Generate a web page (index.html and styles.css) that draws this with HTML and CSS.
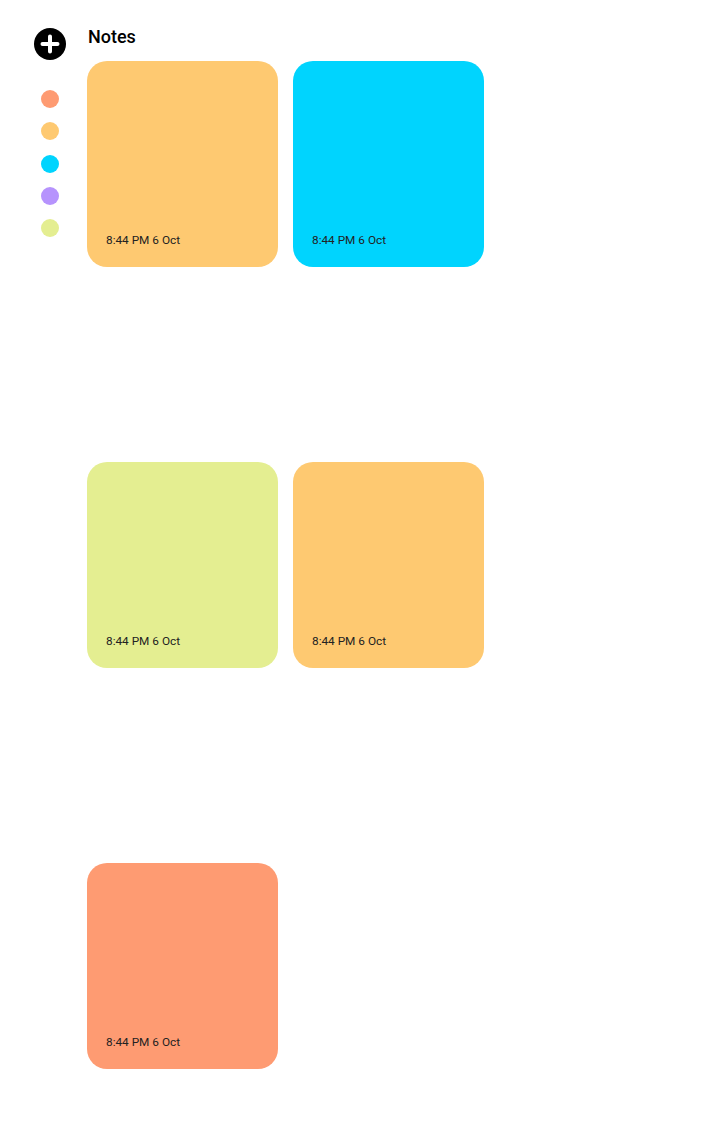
FILE: index.html
```html
<!DOCTYPE html>
<html lang="en">
<head>
<meta charset="utf-8">
<title>Notes</title>
<link rel="stylesheet" href="styles.css">
</head>
<body>
<div class="app">
  <aside class="sidebar">
    <button class="add-btn" aria-label="Add note">
      <svg width="32" height="32" viewBox="0 0 32 32">
        <circle cx="16" cy="16" r="16" fill="#000"/>
        <path d="M16 8.5v15M8.5 16h15" stroke="#fff" stroke-width="4" stroke-linecap="round"/>
      </svg>
    </button>
    <div class="palette">
      <span class="dot c-salmon"></span>
      <span class="dot c-yellow"></span>
      <span class="dot c-cyan"></span>
      <span class="dot c-purple"></span>
      <span class="dot c-lime"></span>
    </div>
  </aside>
  <main class="main">
    <h1 class="title">Notes</h1>
    <div class="grid">
      <div class="note c-yellow"><span class="date">8:44 PM 6 Oct</span></div>
      <div class="note c-cyan"><span class="date">8:44 PM 6 Oct</span></div>
      <div class="note c-lime"><span class="date">8:44 PM 6 Oct</span></div>
      <div class="note c-yellow"><span class="date">8:44 PM 6 Oct</span></div>
      <div class="note c-salmon"><span class="date">8:44 PM 6 Oct</span></div>
    </div>
  </main>
</div>
</body>
</html>
```
FILE: styles.css
```css
* { box-sizing: border-box; }
html, body { margin: 0; padding: 0; background: #fff; }
body { font-family: Roboto, "Liberation Sans", sans-serif; color: #000; }

.app {
  display: flex;
  align-items: flex-start;
  width: 718px;
  min-height: 1148px;
}

.sidebar {
  width: 87px;
  padding: 28px 0 0 34px;
  display: flex;
  flex-direction: column;
}

.add-btn {
  width: 32px;
  height: 32px;
  padding: 0;
  border: 0;
  background: none;
  display: block;
}
.add-btn svg { display: block; }

.palette {
  margin-top: 30px;
  display: flex;
  flex-direction: column;
  gap: 14.25px;
  padding-left: 7px;
}

.dot {
  display: block;
  width: 18px;
  height: 18px;
  border-radius: 50%;
}

.main { padding-top: 25px; }

.title {
  margin: 0;
  font-size: 18px;
  font-weight: 500;
  line-height: 24px;
  height: 36px;
  padding-left: 1px;
}

.grid {
  display: grid;
  grid-template-columns: 191px 191px;
  column-gap: 15px;
  row-gap: 195px;
}

.note {
  height: 206px;
  border-radius: 20px;
  display: flex;
  flex-direction: column;
  justify-content: flex-end;
  padding: 0 18px 20px 19px;
}

.date {
  font-size: 11.8px;
  line-height: 14px;
  color: #222;
}

.c-salmon { background: #fe9b72; }
.c-yellow { background: #fec971; }
.c-cyan { background: #00d4fe; }
.c-purple { background: #b693fd; }
.c-lime { background: #e4ee91; }
```
